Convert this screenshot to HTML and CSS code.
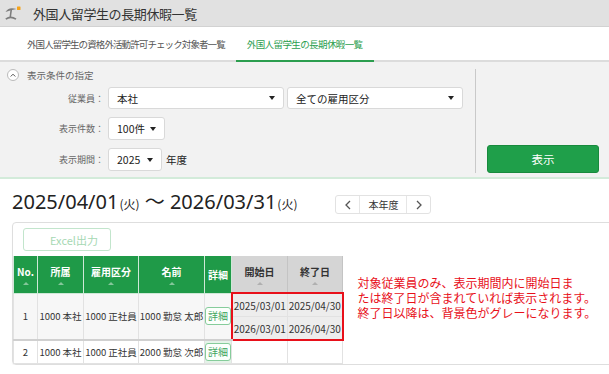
FILE: index.html
```html
<!DOCTYPE html>
<html lang="ja">
<head>
    <meta charset="UTF-8">
    <meta name="viewport" content="width=device-width, initial-scale=1.0">
    <title>外国人留学生の長期休暇一覧</title>
    <link rel="stylesheet" href="styles.css">
</head>
<body>
    <header class="topbar">
        <svg class="app-icon" width="16" height="14" viewBox="0 0 16 14">
            <path d="M0.5 6 Q3.5 0.5 11.5 3 Q6 3.8 0.5 6 Z" fill="#7d7d7d"/>
            <path d="M6.2 4 L5.2 11.5" stroke="#7d7d7d" stroke-width="1.6" fill="none"/>
            <path d="M0.8 13.2 Q5.5 9.5 11 13.2" stroke="#7d7d7d" stroke-width="1.6" fill="none"/>
            <rect x="12" y="0.5" width="3.5" height="3.5" rx="0.5" fill="#f5a31a"/>
        </svg>
        <h1 class="page-title">外国人留学生の長期休暇一覧</h1>
    </header>

    <nav class="tabs">
        <a class="tab">外国人留学生の資格外活動許可チェック対象者一覧</a>
        <a class="tab active">外国人留学生の長期休暇一覧</a>
    </nav>

    <section class="filter">
        <div class="filter-main">
            <div class="filter-head">
                <span class="toggle">
                    <svg width="13" height="13" viewBox="0 0 13 13"><path d="M3.5 7.8 L6.5 4.8 L9.5 7.8" stroke="#555" stroke-width="1.3" fill="none"/></svg>
                </span>
                表示条件の指定
            </div>
            <div class="filter-row first">
                <span class="filter-label">従業員：</span>
                <div class="select wide">本社<span class="caret"></span></div>
                <div class="select wide">全ての雇用区分<span class="caret"></span></div>
            </div>
            <div class="filter-row">
                <span class="filter-label">表示件数：</span>
                <div class="select count">100件<span class="caret"></span></div>
            </div>
            <div class="filter-row">
                <span class="filter-label">表示期間：</span>
                <div class="select year">2025<span class="caret"></span></div>
                <span class="unit">年度</span>
            </div>
        </div>
        <div class="filter-side">
            <button class="btn-show">表示</button>
        </div>
    </section>

    <section class="period">
        <h2 class="period-title">2025/04/01<small>(火)</small> 〜 2026/03/31<small>(火)</small></h2>
        <div class="pager">
            <span class="pager-arrow"><svg width="6" height="10" viewBox="0 0 6 10"><path d="M5 1 L1 5 L5 9" stroke="#555" stroke-width="1.3" fill="none"/></svg></span>
            <span class="pager-now">本年度</span>
            <span class="pager-arrow"><svg width="6" height="10" viewBox="0 0 6 10"><path d="M1 1 L5 5 L1 9" stroke="#555" stroke-width="1.3" fill="none"/></svg></span>
        </div>
    </section>

    <section class="card">
        <button class="btn-excel">Excel出力</button>
        <div class="card-body">
            <table class="list">
                <colgroup>
                    <col style="width:24px"><col style="width:46px"><col style="width:55px"><col style="width:66px">
                    <col style="width:27px"><col style="width:56px"><col style="width:55px">
                </colgroup>
                <thead>
                    <tr>
                        <th>No.<span class="sort"></span></th>
                        <th>所属<span class="sort"></span></th>
                        <th>雇用区分<span class="sort"></span></th>
                        <th>名前<span class="sort"></span></th>
                        <th>詳細</th>
                        <th class="gray">開始日<span class="sort"></span></th>
                        <th class="gray">終了日<span class="sort"></span></th>
                    </tr>
                </thead>
                <tbody>
                    <tr class="shaded">
                        <td rowspan="2" class="row-end">1</td>
                        <td rowspan="2" class="row-end">1000 本社</td>
                        <td rowspan="2" class="row-end">1000 正社員</td>
                        <td rowspan="2" class="row-end">1000 勤怠 太郎</td>
                        <td rowspan="2" class="row-end detail"><span class="btn-detail">詳細</span></td>
                        <td class="date hl-top hl-left">2025/03/01</td>
                        <td class="date hl-top hl-right">2025/04/30</td>
                    </tr>
                    <tr class="shaded">
                        <td class="date hl-bottom hl-left">2026/03/01</td>
                        <td class="date hl-bottom hl-right">2026/04/30</td>
                    </tr>
                    <tr>
                        <td>2</td>
                        <td>1000 本社</td>
                        <td>1000 正社員</td>
                        <td>2000 勤怠 次郎</td>
                        <td class="detail"><span class="btn-detail">詳細</span></td>
                        <td></td>
                        <td></td>
                    </tr>
                </tbody>
            </table>
            <p class="note">対象従業員のみ、表示期間内に開始日ま<br>たは終了日が含まれていれば表示されます。<br>終了日以降は、背景色がグレーになります。</p>
        </div>
    </section>
</body>
</html>
```

FILE: styles.css
```css
body {
    margin: 0;
    font-family: "Noto Sans CJK JP", sans-serif;
    color: #333;
    background: #fff;
    overflow: hidden;
}

/* header */
.topbar {
    height: 26px;
    background: #e1e1e1;
    border-bottom: 1px solid #d2d2d2;
    display: flex;
    align-items: center;
}

.app-icon {
    margin-left: 5px;
}

.page-title {
    margin: 0 0 0 12px;
    font-size: 13px;
    font-weight: normal;
    letter-spacing: -0.4px;
    color: #333;
}

.tabs {
    height: 33px;
    display: flex;
    padding-left: 16px;
    border-bottom: 2px solid #dcdcdc;
}

.tab {
    display: flex;
    align-items: center;
    padding: 0 11px;
    font-size: 9.5px;
    letter-spacing: -0.9px;
    color: #555;
}

.tab.active {
    color: #2c9e4f;
    border-bottom: 2px solid #2c9e4f;
    margin-bottom: -2px;
    letter-spacing: -0.6px;
}

/* filter */
.filter {
    display: flex;
    background: #f2f2f2;
    border-bottom: 2px solid #d3ebda;
}

.filter-main {
    flex: 1;
    padding: 7px 0 6px;
}

.filter-head {
    display: flex;
    align-items: center;
    height: 12px;
    padding-left: 7px;
    font-size: 9.5px;
    color: #666;
}

.toggle {
    width: 12px;
    height: 12px;
    border: 1px solid #bbb;
    border-radius: 50%;
    background: #fff;
    display: flex;
    align-items: center;
    justify-content: center;
    margin-right: 8px;
    box-sizing: border-box;
}

.filter-row {
    display: flex;
    align-items: center;
    margin-top: 8px;
}

.filter-row.first {
    margin-top: 6px;
}

.filter-label {
    width: 104px;
    text-align: right;
    font-size: 9px;
    color: #666;
    margin-right: 4px;
}

.select {
    height: 23px;
    box-sizing: border-box;
    background: #fff;
    border: 1px solid #d9d9d9;
    border-radius: 3px;
    display: flex;
    align-items: center;
    justify-content: space-between;
    padding: 0 8px;
    font-size: 10.5px;
    color: #222;
}

.select.wide {
    width: 176px;
    margin-right: 3px;
}

.filter-row.first .select {
    height: 22px;
}

.select.count {
    width: 57px;
}

.select.year {
    width: 54px;
}

.caret {
    width: 0;
    height: 0;
    border-left: 3px solid transparent;
    border-right: 3px solid transparent;
    border-top: 4px solid #222;
}

.unit {
    margin-left: 4px;
    font-size: 10.5px;
    color: #222;
}

.filter-side {
    width: 122px;
    margin: 7px 0 4px;
    padding-left: 11px;
    border-left: 1px solid #c9c9c9;
    display: flex;
    align-items: flex-end;
}

.btn-show {
    width: 112px;
    height: 28px;
    background: #1f9f4a;
    border: 1px solid #188a3d;
    border-radius: 3px;
    color: #fff;
    font-family: inherit;
    font-size: 11.5px;
    cursor: pointer;
}

/* period */
.period {
    display: flex;
    align-items: flex-start;
    padding: 9px 0 7px 12px;
}

.period-title {
    margin: 0;
    height: 27px;
    font-family: "Noto Sans", "Noto Sans CJK JP", sans-serif;
    font-size: 20px;
    line-height: 27px;
    font-weight: normal;
    color: #222;
}

.period-title small {
    font-family: "Noto Sans CJK JP", sans-serif;
    font-size: 12px;
    margin-left: 1px;
}

.pager {
    display: flex;
    height: 19px;
    margin: 7px 0 0 38px;
    border: 1px solid #e2e2e2;
    border-radius: 3px;
    box-sizing: border-box;
}

.pager-arrow {
    width: 23px;
    display: flex;
    align-items: center;
    justify-content: center;
}

.pager-now {
    width: 46px;
    border-left: 1px solid #e6e6e6;
    border-right: 1px solid #e6e6e6;
    font-size: 10px;
    line-height: 17px;
    text-align: center;
    color: #333;
}

/* result card */
.card {
    margin: 0 -10px 0 12px;
    padding-top: 5px;
    border: 1px solid #dedede;
    border-radius: 4px;
    box-shadow: 0 1px 1px rgba(0, 0, 0, 0.05);
}

.btn-excel {
    display: block;
    margin-left: 10px;
    width: 88px;
    height: 23px;
    padding: 0 0 0 14px;
    background: #fff;
    border: 1px solid #c2e5cc;
    border-radius: 3px;
    color: #a6d8b3;
    font-family: inherit;
    font-size: 11px;
}

.card-body {
    display: flex;
    align-items: flex-start;
    margin-top: 5px;
}

.list {
    border-collapse: collapse;
    table-layout: fixed;
    width: 329px;
}

.list th {
    height: 36px;
    padding: 0;
    background: #1f9a48;
    color: #fff;
    font-size: 10px;
    font-weight: bold;
    border: 1px solid #cfe8d7;
    border-top: none;
    vertical-align: middle;
}

.list th.gray {
    background: #d5d5d5;
    color: #333;
    border-color: #c4c4c4;
}

.sort {
    display: block;
    width: 0;
    height: 0;
    margin: 3px auto 0;
    border-left: 3px solid transparent;
    border-right: 3px solid transparent;
    border-bottom: 3px solid rgba(255, 255, 255, 0.45);
}

.gray .sort {
    border-bottom-color: #b0b0b0;
}

.list td {
    height: 22px;
    padding: 0;
    font-size: 9.5px;
    color: #333;
    text-align: center;
    white-space: nowrap;
    border: 1px solid #e2e2e2;
}

.list tr.shaded td {
    background: #f7f7f7;
}

.list td.row-end {
    border-bottom: 2px solid #d0d0d0;
}

.list td.detail {
    background: #e4f3e8;
}

.list tr.shaded td.date {
    background: #ededed;
    font-size: 10px;
}

.list td.hl-top {
    border-top: 2px solid #e8101a;
}

.list td.hl-bottom {
    border-bottom: 2px solid #e8101a;
}

.list td.hl-left {
    border-left: 2px solid #e8101a;
}

.list td.hl-right {
    border-right: 2px solid #e8101a;
}

.btn-detail {
    display: inline-block;
    padding: 1px 2px;
    border: 1px solid #86cc9b;
    border-radius: 3px;
    background: #fbfffc;
    color: #3fa55f;
    font-size: 10px;
    line-height: 14px;
}

.note {
    margin: 19px 0 0 14px;
    font-size: 12px;
    line-height: 15px;
    color: #e8101a;
}
```
